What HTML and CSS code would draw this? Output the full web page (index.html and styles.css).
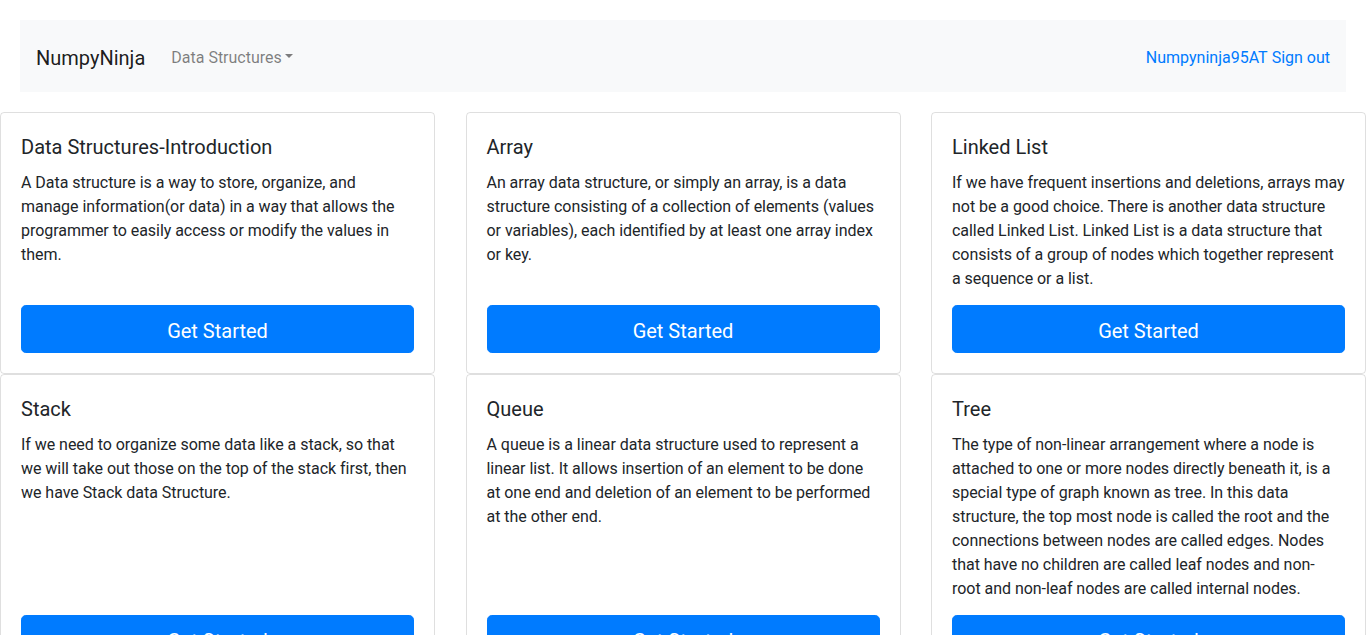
FILE: index.html
```html
<!DOCTYPE html>
<html lang="en">
<head>
<meta charset="utf-8">
<title>NumpyNinja</title>
<link rel="stylesheet" href="styles.css">
</head>
<body>
<nav class="navbar">
  <div class="nav-left">
    <a class="brand" href="#">NumpyNinja</a>
    <a class="nav-link dropdown" href="#">Data Structures<span class="caret"></span></a>
  </div>
  <div class="nav-right">
    <a class="user-link" href="#">Numpyninja95AT</a>
    <a class="user-link" href="#">Sign out</a>
  </div>
</nav>
<main class="cards">
  <div class="card">
    <h5 class="card-title">Data Structures-Introduction</h5>
    <p class="card-text">A Data structure is a way to store, organize, and manage information(or data) in a way that allows the programmer to easily access or modify the values in them.</p>
    <a class="btn" href="#">Get Started</a>
  </div>
  <div class="card">
    <h5 class="card-title">Array</h5>
    <p class="card-text">An array data structure, or simply an array, is a data structure consisting of a collection of elements (values or variables), each identified by at least one array index or key.</p>
    <a class="btn" href="#">Get Started</a>
  </div>
  <div class="card">
    <h5 class="card-title">Linked List</h5>
    <p class="card-text">If we have frequent insertions and deletions, arrays may not be a good choice. There is another data structure called Linked List. Linked List is a data structure that consists of a group of nodes which together represent a&nbsp;sequence or a list.</p>
    <a class="btn" href="#">Get Started</a>
  </div>
  <div class="card">
    <h5 class="card-title">Stack</h5>
    <p class="card-text">If we need to organize some data like a stack, so that we will take out those on the top of the stack first, then we have Stack data Structure.</p>
    <a class="btn" href="#">Get Started</a>
  </div>
  <div class="card">
    <h5 class="card-title">Queue</h5>
    <p class="card-text">A queue is a linear data structure used to represent a linear list. It allows insertion of an element to be done at&nbsp;one end and deletion of an element to be performed at the other end.</p>
    <a class="btn" href="#">Get Started</a>
  </div>
  <div class="card">
    <h5 class="card-title">Tree</h5>
    <p class="card-text">The type of non-linear arrangement where a node is attached to one or more nodes directly beneath it, is a special type of graph known as tree. In this data structure, the top most node is called the root and the connections between nodes are called edges. Nodes that have no children are called leaf nodes and non-<br>root and non-leaf nodes are called internal nodes.</p>
    <a class="btn" href="#">Get Started</a>
  </div>
</main>
</body>
</html>
```
FILE: styles.css
```css
* { box-sizing: border-box; }
html, body { margin: 0; padding: 0; }
body {
  font-family: "Roboto", "Liberation Sans", sans-serif;
  font-size: 16px;
  line-height: 1.5;
  color: #212529;
  background: #fff;
}
a { text-decoration: none; }
.navbar {
  margin: 20px;
  background: #f8f9fa;
  padding: 18px 16px 14px 16px;
  height: 72px;
  display: flex;
  align-items: center;
  justify-content: space-between;
}
.nav-left { display: flex; align-items: center; }
.brand {
  font-size: 20px;
  line-height: 30px;
  color: rgba(0,0,0,.9);
  margin-right: 18px;
  padding: 5px 0;
}
.nav-link {
  color: rgba(0,0,0,.5);
  padding: 8px;
  display: flex;
  align-items: center;
}
.caret {
  display: inline-block;
  margin-left: 3px;
  width: 0; height: 0;
  border-top: 4.8px solid rgba(0,0,0,.5);
  border-left: 4.8px solid transparent;
  border-right: 4.8px solid transparent;
  position: relative;
  top: -2px;
}
.nav-right { display: flex; gap: 4px; }
.user-link { color: #007bff; }
.cards {
  display: flex;
  flex-wrap: wrap;
  justify-content: space-between;
}
.card {
  width: 435px;
  border: 1px solid rgba(0,0,0,.125);
  border-radius: 4px;
  padding: 20px;
  display: flex;
  flex-direction: column;
}
.card-title {
  margin: 0 0 12px 0;
  padding-top: 2px;
  font-size: 20px;
  font-weight: 400;
  line-height: 24px;
}
.card-text {
  margin: 0 0 14px 0;
  letter-spacing: -0.04px;
}
.btn {
  margin-top: auto;
  display: block;
  background: #007bff;
  color: #fff;
  text-align: center;
  font-size: 20px;
  line-height: 30px;
  padding: 10px 16px 6px 16px;
  border: 1px solid #007bff;
  border-radius: 4.8px;
}
```
